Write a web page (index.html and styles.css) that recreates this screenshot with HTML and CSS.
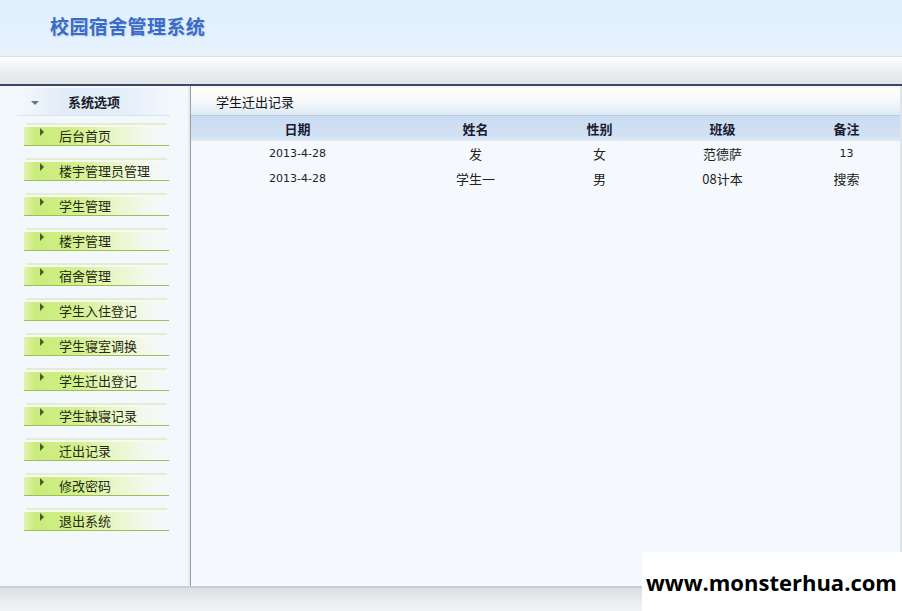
FILE: index.html
```html
<!DOCTYPE html>
<html lang="zh-CN">
<head>
    <meta charset="UTF-8">
    <title>校园宿舍管理系统</title>
    <link rel="stylesheet" href="styles.css">
</head>
<body>
    <div class="page">
        <div class="header">
            <h1>校园宿舍管理系统</h1>
        </div>
        <div class="toolbar"></div>

        <div class="main">
            <div class="sidebar">
                <div class="side-title">
                    <span class="down-arrow"></span>
                    <span>系统选项</span>
                </div>
                <ul class="menu">
                    <li><a href="#"><span class="arrow"></span>后台首页</a></li>
                    <li><a href="#"><span class="arrow"></span>楼宇管理员管理</a></li>
                    <li><a href="#"><span class="arrow"></span>学生管理</a></li>
                    <li><a href="#"><span class="arrow"></span>楼宇管理</a></li>
                    <li><a href="#"><span class="arrow"></span>宿舍管理</a></li>
                    <li><a href="#"><span class="arrow"></span>学生入住登记</a></li>
                    <li><a href="#"><span class="arrow"></span>学生寝室调换</a></li>
                    <li><a href="#"><span class="arrow"></span>学生迁出登记</a></li>
                    <li><a href="#"><span class="arrow"></span>学生缺寝记录</a></li>
                    <li><a href="#"><span class="arrow"></span>迁出记录</a></li>
                    <li><a href="#"><span class="arrow"></span>修改密码</a></li>
                    <li><a href="#"><span class="arrow"></span>退出系统</a></li>
                </ul>
            </div>

            <div class="content">
                <div class="content-title">学生迁出记录</div>
                <table class="record-table">
                    <thead>
                        <tr>
                            <th class="c-date">日期</th>
                            <th class="c-name">姓名</th>
                            <th class="c-sex">性别</th>
                            <th class="c-class">班级</th>
                            <th>备注</th>
                        </tr>
                    </thead>
                    <tbody>
                        <tr>
                            <td class="num">2013-4-28</td>
                            <td>发</td>
                            <td>女</td>
                            <td>范德萨</td>
                            <td class="num">13</td>
                        </tr>
                        <tr>
                            <td class="num">2013-4-28</td>
                            <td>学生一</td>
                            <td>男</td>
                            <td>08计本</td>
                            <td>搜索</td>
                        </tr>
                    </tbody>
                </table>
            </div>
        </div>

        <div class="footer"></div>
    </div>

    <div class="watermark">www.monsterhua.com</div>
</body>
</html>
```

FILE: styles.css
```css
* {
    margin: 0;
    padding: 0;
    box-sizing: border-box;
}

body {
    font-family: "Noto Sans CJK SC", "Noto Sans", sans-serif;
    font-size: 13px;
    color: #222;
    background: #f4f8fc;
    overflow: hidden;
}

.page {
    display: flex;
    flex-direction: column;
    height: 611px;
}

.header {
    height: 57px;
    background: linear-gradient(180deg, #e0effc 0%, #e6f3fd 100%);
    border-bottom: 1px solid #d6dee6;
    padding-left: 50px;
    display: flex;
    align-items: center;
}

.header h1 {
    font-size: 19px;
    font-weight: bold;
    color: #3a6cc6;
    letter-spacing: 0.4px;
    margin-top: -6px;
    text-shadow: 1px 1px 1px rgba(120, 150, 200, 0.35);
}

.toolbar {
    height: 29px;
    border-top: 1px solid #fff;
    background: linear-gradient(180deg, #fbfcfd 0%, #eceef0 50%, #e2e5e8 100%);
    border-bottom: 2px solid #3b4767;
}

.main {
    display: flex;
    height: 500px;
}

.sidebar {
    width: 191px;
    background: #f3f8fd;
    border-right: 1px solid #9a9ea3;
    box-shadow: inset -5px 0 0 -3px #e6ebf0;
    padding-top: 2px;
}

.side-title {
    margin-left: 17px;
    width: 153px;
    height: 28px;
    display: flex;
    align-items: center;
    font-weight: bold;
    font-size: 13px;
    color: #1a1a2a;
    background: linear-gradient(90deg, #f3f8fd 0%, #e2ecf8 30%, #e4eef9 70%, #f3f8fd 100%);
    border-bottom: 1px solid #d7e3ef;
}

.down-arrow {
    width: 0;
    height: 0;
    margin: 2px 29px 0 14px;
    border-left: 4px solid transparent;
    border-right: 4px solid transparent;
    border-top: 4px solid #6a7480;
}

.menu {
    list-style: none;
    margin-top: 3px;
}

.menu li {
    height: 35px;
    padding: 6px 0 0 24px;
}

.menu a {
    display: flex;
    align-items: center;
    width: 145px;
    height: 21px;
    padding-left: 16px;
    padding-bottom: 2px;
    color: #1e2a10;
    text-decoration: none;
    font-size: 13px;
    background: linear-gradient(90deg, #e2f3b0 0%, #c9ec7a 8%, #d2ef8c 35%, #e8f6c4 60%, #f3f8f0 85%, #f3f8fd 100%);
    border-top: 2px solid #f6faf0;
    border-bottom: 1px solid #9cbf52;
    box-shadow: 0 -4px 0 -2px #e4ecd6;
}

.arrow {
    width: 0;
    height: 0;
    margin: -6px 15px 0 0;
    border-top: 4px solid transparent;
    border-bottom: 4px solid transparent;
    border-left: 4px solid #4a5a32;
}

.content {
    flex: 1;
    background: #f5f9fd;
    border-right: 2px solid #dfe4e8;
    padding-top: 2px;
}

.content-title {
    height: 28px;
    padding-left: 25px;
    display: flex;
    align-items: center;
    font-size: 13px;
    color: #111;
    background: linear-gradient(180deg, #fffef7 0%, #f5f8fa 50%, #dde9f5 100%);
    border-bottom: 1px solid #b8cde0;
}

.record-table {
    width: 100%;
    border-collapse: collapse;
    table-layout: fixed;
}

.record-table th {
    height: 25px;
    font-weight: bold;
    font-size: 13px;
    color: #1a1a30;
    background: linear-gradient(180deg, #cadcf1 0%, #d1e1f3 80%, #e0ebf6 100%);
    text-align: center;
}

.record-table td {
    height: 25px;
    text-align: center;
    font-size: 13px;
    color: #222;
}

.record-table td.num {
    font-family: "DejaVu Sans", sans-serif;
    font-size: 11px;
}

.c-date {
    width: 213px;
}

.c-name {
    width: 143px;
}

.c-sex {
    width: 105px;
}

.c-class {
    width: 141px;
}

.footer {
    flex: 1;
    border-top: 2px solid #c9ced3;
    background: linear-gradient(180deg, #dbe0e4 0%, #e8ebed 50%, #f2f3f4 100%);
}

.watermark {
    position: absolute;
    left: 642px;
    top: 552px;
    width: 260px;
    height: 59px;
    background: #fff;
    padding-left: 4px;
    display: flex;
    align-items: center;
    font-family: "Open Sans", sans-serif;
    font-weight: bold;
    font-size: 22px;
    color: #000;
    white-space: nowrap;
}
```
